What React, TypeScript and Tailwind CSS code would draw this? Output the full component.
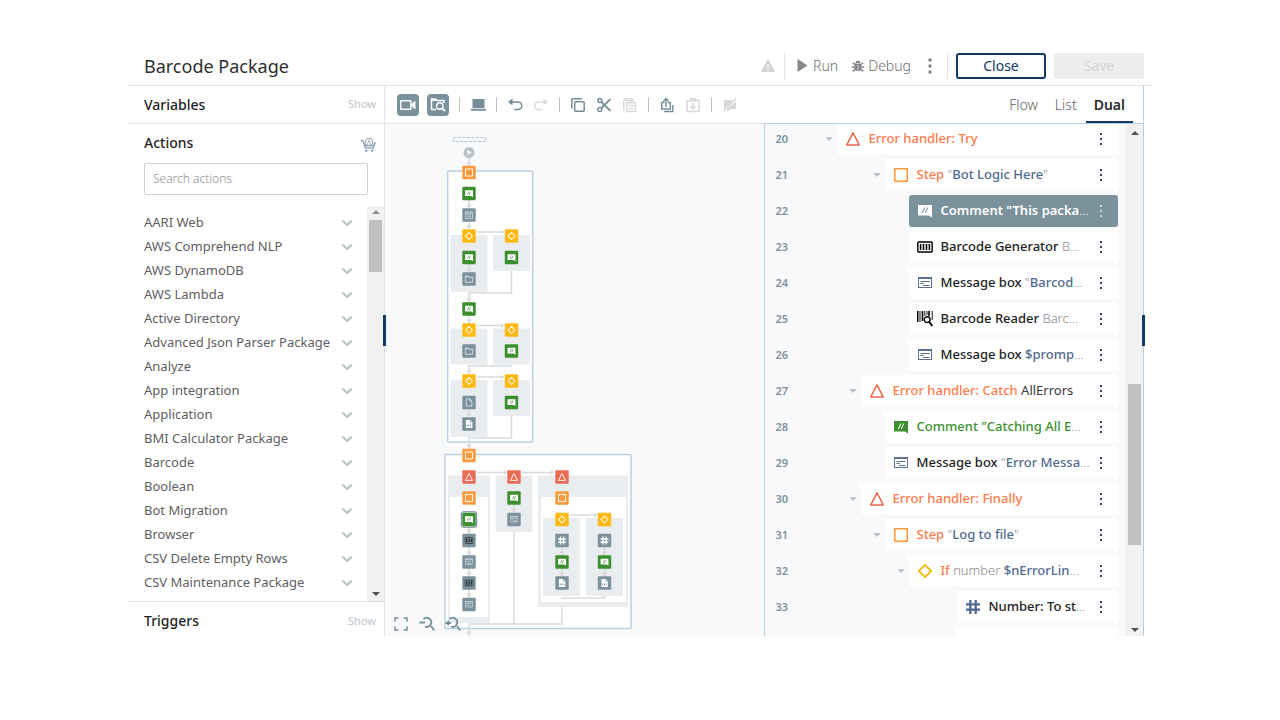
import React from 'react';
import clsx from 'clsx';

type IconName =
  | 'step'
  | 'error'
  | 'if'
  | 'comment'
  | 'calendar'
  | 'folder'
  | 'file'
  | 'log'
  | 'barcode'
  | 'reader'
  | 'message'
  | 'hash';

interface Part {
  text: string;
  className: string;
}

interface Line {
  no: number;
  indent: string;
  icon: IconName;
  iconClass: string;
  toggle?: boolean;
  selected?: boolean;
  parts: Part[];
}

const packages = [
  'AARI Web',
  'AWS Comprehend NLP',
  'AWS DynamoDB',
  'AWS Lambda',
  'Active Directory',
  'Advanced Json Parser Package',
  'Analyze',
  'App integration',
  'Application',
  'BMI Calculator Package',
  'Barcode',
  'Boolean',
  'Bot Migration',
  'Browser',
  'CSV Delete Empty Rows',
  'CSV Maintenance Package',
];

const ORANGE = 'font-medium text-[#ff7b4a]';
const BLUE = 'font-medium text-[#4f6a8f]';
const DARK = 'font-medium text-[#222]';
const GREEN = 'font-medium text-[#3c8f2f]';
const GRAY = 'font-light text-[#8a8a8a]';
const WHITE = 'font-semibold text-white';

const lines: Line[] = [
  { no: 20, indent: 'ml-9', icon: 'error', iconClass: 'text-[#e8694f]', toggle: true, parts: [{ text: 'Error handler: Try', className: ORANGE }] },
  { no: 21, indent: 'ml-21', icon: 'step', iconClass: 'text-[#fb9a3c]', toggle: true, parts: [{ text: 'Step ', className: ORANGE }, { text: '"', className: GRAY }, { text: 'Bot Logic Here', className: BLUE }, { text: '"', className: GRAY }] },
  { no: 22, indent: 'ml-27', icon: 'comment', iconClass: 'text-white', selected: true, parts: [{ text: 'Comment "This packa', className: WHITE }, { text: '...', className: 'font-light text-white' }] },
  { no: 23, indent: 'ml-27', icon: 'barcode', iconClass: 'text-black', parts: [{ text: 'Barcode Generator ', className: DARK }, { text: 'B...', className: GRAY }] },
  { no: 24, indent: 'ml-27', icon: 'message', iconClass: 'text-[#5b7397]', parts: [{ text: 'Message box ', className: DARK }, { text: '"', className: GRAY }, { text: 'Barcod', className: BLUE }, { text: '...', className: GRAY }] },
  { no: 25, indent: 'ml-27', icon: 'reader', iconClass: 'text-black', parts: [{ text: 'Barcode Reader ', className: DARK }, { text: 'Barc...', className: GRAY }] },
  { no: 26, indent: 'ml-27', icon: 'message', iconClass: 'text-[#5b7397]', parts: [{ text: 'Message box ', className: DARK }, { text: '$promp', className: BLUE }, { text: '...', className: GRAY }] },
  { no: 27, indent: 'ml-15', icon: 'error', iconClass: 'text-[#e8694f]', toggle: true, parts: [{ text: 'Error handler: Catch ', className: ORANGE }, { text: 'AllErrors', className: 'text-[#3a3a3a]' }] },
  { no: 28, indent: 'ml-21', icon: 'comment', iconClass: 'text-[#3c8f2f]', parts: [{ text: 'Comment "Catching All E', className: GREEN }, { text: '...', className: GRAY }] },
  { no: 29, indent: 'ml-21', icon: 'message', iconClass: 'text-[#5b7397]', parts: [{ text: 'Message box ', className: DARK }, { text: '"', className: GRAY }, { text: 'Error Messa', className: BLUE }, { text: '...', className: GRAY }] },
  { no: 30, indent: 'ml-15', icon: 'error', iconClass: 'text-[#e8694f]', toggle: true, parts: [{ text: 'Error handler: Finally', className: ORANGE }] },
  { no: 31, indent: 'ml-21', icon: 'step', iconClass: 'text-[#fb9a3c]', toggle: true, parts: [{ text: 'Step ', className: ORANGE }, { text: '"', className: GRAY }, { text: 'Log to file', className: BLUE }, { text: '"', className: GRAY }] },
  { no: 32, indent: 'ml-27', icon: 'if', iconClass: 'text-[#fdb913]', toggle: true, parts: [{ text: 'If ', className: ORANGE }, { text: 'number ', className: GRAY }, { text: '$nErrorLin', className: BLUE }, { text: '...', className: GRAY }] },
  { no: 33, indent: 'ml-39', icon: 'hash', iconClass: 'text-[#4f6a8f]', parts: [{ text: 'Number: To st', className: DARK }, { text: '...', className: GRAY }] },
];

// Glyphs share a 16x16 box so that the list and the flow can both use them
const glyphs: Record<IconName, React.ReactNode> = {
  step: <rect x="1.75" y="1.75" width="12.5" height="12.5" fill="none" stroke="currentColor" strokeWidth="1.6" />,
  error: <path d="M8 1.8 14.3 14H1.7Z" fill="none" stroke="currentColor" strokeWidth="1.6" strokeLinejoin="round" />,
  if: <path d="M8 1.8 14.2 8 8 14.2 1.8 8Z" fill="none" stroke="currentColor" strokeWidth="1.8" strokeLinejoin="round" />,
  comment: (
    <path
      fillRule="evenodd"
      fill="currentColor"
      d="M1 2h14v12.500L12 12.500H1ZM7.2 4.5 4.8 10h1.1l2.4-5.5ZM10.2 4.5 7.8 10h1.1l2.4-5.5Z"
    />
  ),
  calendar: (
    <path d="M1.7 2.7h12.6v11.6H1.7ZM1.7 5.5h12.6M4.5 1v2M11.5 1v2M4 8h8M4 11h8" fill="none" stroke="currentColor" strokeWidth="1.4" />
  ),
  folder: <path d="M1.2 2.7h5l1.2 2h7.4v9H1.2ZM1.2 4.2h6" fill="none" stroke="currentColor" strokeWidth="1.6" />,
  file: <path d="M3.2 1.5h6.3l3.5 3.7v9.3H3.2ZM9.3 1.7v3.7h3.6" fill="none" stroke="currentColor" strokeWidth="1.6" />,
  log: (
    <path fillRule="evenodd" fill="currentColor" d="M2.5 1h7.3L14 5v10H2.5ZM4 9v3h1.5V9ZM7 9v3h1.8V9ZM10.5 9v3H12V9ZM9.500 2v3.500H13Z" />
  ),
  barcode: (
    <>
      <rect x="0.8" y="3" width="14.4" height="10" rx="1" fill="none" stroke="currentColor" strokeWidth="1.4" />
      <path d="M3.6 5v6M6.5 5v6M9.5 5v6M12.4 5v6" stroke="currentColor" strokeWidth="1.6" />
    </>
  ),
  reader: (
    <>
      <path d="M.7 0v11M5.5 0v10M12 0v5" stroke="currentColor" strokeWidth="1.6" />
      <path d="M3 0v11M7.8 0v5M10 0v4M15.2 0v9" stroke="currentColor" strokeWidth="0.9" />
      <circle cx="10.2" cy="8.6" r="2.9" fill="#fff" stroke="currentColor" strokeWidth="1.4" />
      <path d="m12.3 11 3 4" stroke="currentColor" strokeWidth="1.9" />
    </>
  ),
  message: (
    <>
      <rect x="1.500" y="2.500" width="13" height="10" fill="none" stroke="currentColor" />
      <path d="M1 3.500h14" stroke="currentColor" />
      <path d="M3.500 6.500h9M3.500 8.500H7M6 10.500h6.500" stroke="currentColor" />
    </>
  ),
  hash: <path d="M5.3 1v14M10.7 1v14M1 5.3h14M1 10.7h14" stroke="currentColor" strokeWidth="2.3" />,
};

const Icon = ({ name, className }: { name: IconName; className?: string }) => (
  <svg viewBox="0 0 16 16" className={clsx('size-4 shrink-0', className)} aria-hidden="true">
    {glyphs[name]}
  </svg>
);

const Dots = () => (
  <svg viewBox="0 0 4 16" className="h-4 w-1" fill="currentColor" aria-hidden="true">
    <rect x="1" y="2" width="2" height="2" />
    <rect x="1" y="7" width="2" height="2" />
    <rect x="1" y="12" width="2" height="2" />
  </svg>
);

const Header = () => (
  <header className="flex h-[39px] items-center border-b border-[#dfe3e8] pr-2 pl-4">
    <h1 className="text-lg text-[#2f2f2f]">Barcode Package</h1>
    <div className="ml-auto flex items-center">
      <svg viewBox="0 0 16 16" className="size-4" aria-hidden="true">
        <path d="M8 2 14.5 13.5h-13Z" fill="#d2d2d2" stroke="#d2d2d2" strokeLinejoin="round" />
        <path d="M8 6v4M8 11.2v1.2" stroke="#fff" strokeWidth="1.4" />
      </svg>
      <div className="mx-2 h-[26px] w-px bg-[#dfe3e8]" />
      <button className="ml-1 flex items-center gap-1 text-sm font-light text-[#6b6b6b]">
        <svg viewBox="0 0 12 14" className="h-[14px] w-3" aria-hidden="true">
          <path d="M.5 0v13l10-6.500Z" fill="#85888c" />
        </svg>
        Run
      </button>
      <button className="ml-[14px] flex items-center gap-1 text-sm font-light text-[#6b6b6b]">
        <svg viewBox="0 0 12 12" className="size-3" fill="#808387" stroke="#808387" aria-hidden="true">
          <path d="M3.5 3a2.5 2 0 0 1 5 0Z" strokeWidth="0.5" />
          <path d="M2.800 4.2h6.400v4a3.200 3 0 0 1-6.400 0Z" stroke="none" />
          <path d="M.8 2.8 3 4.6h6l2.2-1.8M0 7h12M.8 11.4 3.2 9M11.2 11.4 8.8 9" fill="none" strokeWidth="1.5" />
          <path d="M6 5v6" stroke="#fff" strokeWidth="0.7" />
        </svg>
        Debug
      </button>
      <button aria-label="More" className="mr-[14px] ml-4 text-[#808080]">
        <svg viewBox="0 0 6 16" className="h-4 w-[6px]" fill="currentColor" aria-hidden="true">
          <circle cx="3" cy="2" r="1.7" />
          <circle cx="3" cy="8" r="1.7" />
          <circle cx="3" cy="14" r="1.7" />
        </svg>
      </button>
      <div className="mr-2 h-[26px] w-px bg-[#dfe3e8]" />
      <div className="flex gap-2">
        <button className="h-[26px] w-[90px] rounded-[3px] border-2 border-[#123a66] text-sm leading-none text-[#123a66]">Close</button>
        <button disabled className="h-[26px] w-[90px] rounded-[3px] bg-[#ededed] text-sm leading-none text-[#d5d5d5]">
          Save
        </button>
      </div>
    </div>
  </header>
);

const Sidebar = () => (
  <aside className="flex w-[257px] shrink-0 flex-col border-r border-[#dfe3e8]">
    <div className="flex h-[38px] shrink-0 items-center justify-between border-b border-[#dfe3e8] pr-2 pl-4">
      <h2 className="text-sm font-medium text-[#1f1f1f]">Variables</h2>
      <button className="text-[11px] text-[#bcc4ca]">Show</button>
    </div>
    <div className="flex h-[38px] shrink-0 items-center justify-between pr-2 pl-4">
      <h2 className="text-sm font-medium text-[#1f1f1f]">Actions</h2>
      <button aria-label="Bot store" className="mt-1">
        <svg viewBox="0 0 16 16" className="size-4" fill="none" stroke="#8c9db3" aria-hidden="true">
          <circle cx="9" cy="5" r="3.7" />
          <path d="M7.5 6.8 9 3.2l1.5 3.6" strokeWidth="0.8" />
          <path d="M.8 3.2 3 3.8l2.3 7h8L15.2 5M4.5 8.5h9.3" strokeWidth="1.3" />
          <circle cx="6.3" cy="13.6" r="0.9" fill="#8c9db3" />
          <circle cx="12.2" cy="13.6" r="0.9" fill="#8c9db3" />
        </svg>
      </button>
    </div>
    <input
      type="text"
      aria-label="Search actions"
      placeholder="Search actions"
      className="mx-4 mt-px mb-[11px] h-8 shrink-0 rounded-xs border border-[#d0d4d6] px-2 pb-[2px] text-xs font-light text-[#555] placeholder:text-[#8e8e8e]"
    />
    <div className="flex min-h-0 flex-1">
      <ul className="min-w-0 flex-1 overflow-hidden pt-[5px]">
        {packages.map((name) => (
          <li key={name}>
            <button className="flex h-6 w-full items-center justify-between pr-[14px] pl-4 text-left text-[13px] text-[#5e6062]">
              {name}
              <svg viewBox="0 0 12 12" className="size-3" fill="none" stroke="#b9c4ca" strokeWidth="2" aria-hidden="true">
                <path d="m1.500 3.500 4.500 4.500 4.500-4.500" />
              </svg>
            </button>
          </li>
        ))}
      </ul>
      <div className="flex w-[17px] flex-col items-center bg-[#f1f1f1] py-1">
        <svg viewBox="0 0 8 5" className="h-[5px] w-2" fill="#8f8f8f" aria-hidden="true">
          <path d="M0 4h8L4 0Z" />
        </svg>
        <div className="mt-[5px] h-[52px] w-[13px] bg-[#c1c1c1]" />
        <svg viewBox="0 0 8 5" className="mt-auto h-[5px] w-2" fill="#505050" aria-hidden="true">
          <path d="M0 0h8L4 4Z" />
        </svg>
      </div>
    </div>
    <div className="flex h-[35px] shrink-0 items-center justify-between border-t border-[#dfe3e8] pt-1 pr-2 pl-4">
      <h2 className="text-sm font-medium text-[#1f1f1f]">Triggers</h2>
      <button className="text-[11px] text-[#bcc4ca]">Show</button>
    </div>
  </aside>
);

const Separator = () => <div className="h-[15px] w-px bg-[#b9c4ca]" />;

const Tool = ({ label, disabled, children }: { label: string; disabled?: boolean; children: React.ReactNode }) => (
  <button aria-label={label} disabled={disabled} className={disabled ? 'text-[#d8d8d8]' : 'text-[#768d98]'}>
    <svg viewBox="0 0 16 16" className="size-4" fill="none" stroke="currentColor" strokeWidth="1.5" aria-hidden="true">
      {children}
    </svg>
  </button>
);

const Toolbar = () => (
  <div className="flex h-[38px] shrink-0 items-center justify-between border-b border-[#dfe3e8] pr-[10px] pl-3">
    <div className="flex items-center gap-[10px]">
      <div className="flex gap-2">
        <button aria-label="Record" className="flex size-[22px] items-center justify-center rounded-[4px] bg-[#7b919b]">
          <svg viewBox="0 0 16 16" className="size-4" fill="none" stroke="#fff" strokeWidth="1.4" aria-hidden="true">
            <rect x="0.8" y="3.8" width="10" height="8.400" />
            <path d="M11 7.200 15.500 3.500v9L11 8.800Z" fill="#fff" stroke="none" />
          </svg>
        </button>
        <button aria-label="Inspect" className="flex size-[22px] items-center justify-center rounded-[4px] bg-[#7b919b]">
          <svg viewBox="0 0 16 16" className="size-4" fill="none" stroke="#fff" strokeWidth="1.4" aria-hidden="true">
            <path d="M6 12.500H1.500V2h4L7 3.500h7V6" />
            <path d="M1.500 3.200h4.500" />
            <circle cx="9.800" cy="9" r="3.200" />
            <path d="m12 11.200 3 3" strokeWidth="1.900" />
          </svg>
        </button>
      </div>
      <Separator />
      <Tool label="Device">
        <path d="M2.500 2h12v9h-12ZM1 11.800h15v2H1Z" fill="currentColor" stroke="none" />
      </Tool>
      <Separator />
      <Tool label="Undo">
        <path d="M3 5h8a3.700 3.700 0 0 1 0 7.500H7" />
        <path d="M1 5 5.500 1.500v7Z" fill="currentColor" stroke="none" />
      </Tool>
      <Tool label="Redo" disabled>
        <path d="M13 5H5.500a3.700 3.700 0 0 0 0 7.500H9" />
        <path d="M15 5 10.500 1.500v7Z" fill="currentColor" stroke="none" />
      </Tool>
      <Separator />
      <Tool label="Copy">
        <rect x="4.700" y="4.700" width="9.500" height="9.500" rx="1" />
        <path d="M1.800 11.500V2.700A.8.800 0 0 1 2.600 1.800h9.500" />
      </Tool>
      <Tool label="Cut">
        <circle cx="3.800" cy="3.600" r="2" />
        <circle cx="3.800" cy="12.400" r="2" />
        <path d="M5.300 5 14.500 13.800M5.300 11 14.500 2.200" strokeWidth="1.800" />
      </Tool>
      <Tool label="Paste" disabled>
        <path d="M3 13H1.800V3H4M9.500 3h1.700v1.500M4 1.700h5.500v2H4ZM5 5.700h8.500v8.800H5ZM7 8.500h4.500M7 11.500h4.500" />
      </Tool>
      <Separator />
      <Tool label="Share">
        <path d="M5.500 5.500H2.700v6.500h8.600V5.500H8.500M5 14.500h8.800V8M7 10V2M4.300 4.200 7 1.500l2.700 2.700" strokeWidth="1.400" />
      </Tool>
      <Tool label="Import" disabled>
        <path d="M2 3.500h12v11H2ZM5.500 1.700h5v2h-5ZM8 6v6M5.500 9.500 8 12l2.500-2.500" />
      </Tool>
      <Separator />
      <Tool label="Disable" disabled>
        <path d="M2 3h9.500L2 12.500ZM14 4.500V12H9l-4 3v-3.200Z" fill="currentColor" stroke="none" />
        <path d="M14 1.500 1.500 14.500" />
      </Tool>
    </div>
    <nav className="flex h-full gap-px text-sm">
      <button className="px-2 font-light text-[#5e6062]">Flow</button>
      <button className="px-2 font-light text-[#5e6062]">List</button>
      <button className="border-b-2 border-[#123a66] px-2 pt-[2px] font-semibold text-[#2b2b2b]">Dual</button>
    </nav>
  </div>
);

// [icon, x, y] of each node centre on the canvas
const nodes: [IconName, number, number][] = [
  ['step', 84, 48.5],
  ['comment', 84, 69.5],
  ['calendar', 84, 91],
  ['if', 84, 112],
  ['if', 126.5, 112],
  ['comment', 84, 133.5],
  ['comment', 126.5, 133.5],
  ['folder', 84, 155],
  ['comment', 84, 185],
  ['if', 84, 206],
  ['if', 126.5, 206],
  ['folder', 84, 227],
  ['comment', 126.5, 227],
  ['if', 84, 257],
  ['if', 126.5, 257],
  ['file', 84, 278.5],
  ['comment', 126.5, 278.5],
  ['log', 84, 300],
  ['step', 84, 331.5],
  ['error', 84, 353],
  ['error', 129, 353],
  ['error', 177, 353],
  ['step', 84, 374],
  ['comment', 129, 374],
  ['step', 177, 374],
  ['comment', 84, 395.5],
  ['message', 129, 395.5],
  ['if', 177, 395.5],
  ['if', 219.5, 395.5],
  ['barcode', 84, 416.5],
  ['hash', 177, 416.5],
  ['hash', 219.5, 416.5],
  ['message', 84, 438],
  ['comment', 177, 438],
  ['comment', 219.5, 438],
  ['barcode', 84, 459],
  ['log', 177, 459],
  ['log', 219.5, 459],
  ['message', 84, 480.5],
];

const nodeColor: Partial<Record<IconName, string>> = {
  step: '#fb9a3c',
  error: '#ea6b54',
  if: '#fdb913',
  comment: '#3c8f2f',
};

const glyphColor: Partial<Record<IconName, string>> = {
  barcode: '#22292d',
  message: '#e3e9ec',
  folder: '#dde4e8',
  calendar: '#d3dce1',
  file: '#dde4e8',
};

const blocks = [
  { x: 65.5, y: 111, w: 37, h: 57 },
  { x: 108, y: 111, w: 37, h: 36 },
  { x: 65.5, y: 204.5, w: 37, h: 36 },
  { x: 108, y: 204.5, w: 37, h: 36 },
  { x: 65.5, y: 256, w: 37, h: 57 },
  { x: 108, y: 256, w: 37, h: 36 },
  { x: 63, y: 351.5, w: 42, h: 147.5 },
  { x: 110.5, y: 351.5, w: 37, h: 56.5 },
  { x: 153, y: 351.5, w: 90, h: 131.5 },
];

// Lower end of each short vertical arrow
const arrows: [number, number][] = [
  [84, 42], [84, 84], [84, 105], [84, 148], [84, 178], [84, 199], [84, 250], [84, 293], [84, 324],
  [84, 409], [84, 431], [84, 452], [84, 473], [84, 511], [129, 388],
  [177, 431], [177, 452], [219.5, 431], [219.5, 452],
];

const FlowCanvas = () => (
  <div className="relative min-w-0 flex-1 overflow-hidden bg-[#f7f9fb]">
    <svg viewBox="0 0 379 512" className="h-[512px] w-[379px]" fill="none" role="img" aria-label="Bot flow">
      <rect x="68.500" y="13.500" width="32" height="4" stroke="#b9c4ca" strokeWidth="1.200" strokeDasharray="3 1.500" />
      <circle cx="84" cy="28.500" r="5.500" fill="#b9c4ca" />
      <path d="m82.500 26 4 2.500-4 2.500Z" fill="#fff" />
      <g fill="#fff" stroke="#b8d0e1" strokeWidth="1.500">
        <rect x="62.700" y="47" width="85" height="271" rx="1" />
        <rect x="60" y="330.500" width="186" height="174" rx="1" />
      </g>
      {blocks.map((b) => (
        <rect key={`${b.x}-${b.y}`} x={b.x} y={b.y} width={b.w} height={b.h} fill="#e9edf0" />
      ))}
      <rect x="65" y="373" width="38" height="120" fill="#fff" />
      <rect x="156" y="373" width="85" height="105" fill="#fff" />
      <rect x="158" y="394" width="37" height="78" fill="#e9edf0" />
      <rect x="201" y="394" width="37" height="78" fill="#e9edf0" />
      <g stroke="#d9dadb" strokeWidth="1.500">
        <path d="M84 34v8M84 76v28M84 140v8M84 168v11M84 191v8M84 241v9M84 285v8M84 313v12M84 402v72M84 499v13M129 380v8M177 423v30M219.500 423v30" />
        <path d="M126.500 147v22H84M126.500 241v1H84M126.500 292v22H84M129 408v92M177 483v17H84M219.500 472v2H177v1" />
        <path d="M92 108h27M92 201.500h27M92 253h27M92 348.500h29M137 348.500h32M185 391h27" />
      </g>
      {arrows.map(([x, y]) => (
        <path key={`${x}-${y}`} d={`M${x - 3} ${y - 3.5}h6l-3 3.500Z`} fill="#d9dadb" />
      ))}
      <path
        d="m116 105.500 3 2.500-3 2.500ZM116 199l3 2.500-3 2.500ZM116 250.500l3 2.500-3 2.500ZM119 346l3 2.500-3 2.500ZM166 346l3 2.500-3 2.500ZM209 388.500l3 2.500-3 2.500Z"
        fill="#d9dadb"
      />
      <rect x="76.300" y="387.800" width="15.400" height="15.400" rx="2" fill="#fff" stroke="#5f7399" />
      {nodes.map(([icon, x, y]) => (
        <g key={`${x}-${y}`} color={glyphColor[icon] ?? '#fff'}>
          <rect x={x - 6.7} y={y - 6.7} width="13.400" height="13.400" rx="1" fill={nodeColor[icon] ?? '#7b919b'} />
          <svg x={x - 4.5} y={y - 4.5} width="9" height="9" viewBox="0 0 16 16">
            {glyphs[icon]}
          </svg>
        </g>
      ))}
    </svg>
    <div className="absolute bottom-1 left-2 flex gap-[10px]">
      <Tool label="Fit to screen">
        <path d="M2 5.500V2h3.500M10.500 2H14v3.500M14 10.500V14h-3.500M5.500 14H2v-3.500" />
      </Tool>
      <Tool label="Zoom out">
        <path d="M4.500 3.200a4.500 4.500 0 1 1 1.500 7.300M12 10l3.200 4.500M.5 6.500H6" strokeWidth="1.800" />
      </Tool>
      <Tool label="Zoom in">
        <path d="M4.500 3.200a4.500 4.500 0 1 1 1.500 7.300M12 10l3.200 4.500M.5 7H6M3.200 4.500v5" strokeWidth="1.800" />
      </Tool>
    </div>
  </div>
);

const ListLine = ({ line }: { line: Line }) => (
  <li className="flex h-9 shrink-0 items-center pr-2">
    <span className="w-9 shrink-0 pl-[11px] text-[11px] font-semibold text-[#7b919b]">{line.no}</span>
    <div className={clsx('relative flex h-8 min-w-0 flex-1 items-center rounded-[3px] pr-[15px] pl-2', line.indent, line.selected ? 'bg-[#7b919b]' : 'bg-white')}>
      {line.toggle && (
        <button aria-label="Collapse" className="absolute top-3 -left-3">
          <svg viewBox="0 0 8 8" className="size-2" fill="#b9c4ca" aria-hidden="true">
            <path d="M1 2h6v1L4 6 1 3Z" />
          </svg>
        </button>
      )}
      <Icon name={line.icon} className={line.iconClass} />
      <p className="ml-2 min-w-0 flex-1 text-[13px] whitespace-pre">
        {line.parts.map((part, i) => (
          <span key={i} className={part.className}>
            {part.text}
          </span>
        ))}
      </p>
      <button aria-label="Line menu" className={line.selected ? 'text-[#c9d3d8]' : 'text-[#33415c]'}>
        <Dots />
      </button>
    </div>
  </li>
);

const ListPanel = () => (
  <div className="-mt-px flex min-w-0 flex-1 border-t border-l border-[#b5cfe0] bg-[#f7f9fb]">
    <div className="min-w-0 flex-1 overflow-hidden">
      <ul className="-mt-[3px] flex flex-col">
        {lines.map((line) => (
          <ListLine key={line.no} line={line} />
        ))}
        {/* Next line, mostly scrolled out of view */}
        <li className="flex h-9 shrink-0 items-center pr-2 pl-9">
          <div className="ml-39 flex h-8 flex-1 items-center rounded-[3px] bg-white pl-2">
            <Icon name="comment" className="text-[#3c8f2f]" />
          </div>
        </li>
      </ul>
    </div>
    <div className="flex w-[17px] shrink-0 flex-col items-center bg-[#f1f1f1] pt-[6px] pb-[3px]">
      <svg viewBox="0 0 8 5" className="h-[5px] w-2" fill="#505050" aria-hidden="true">
        <path d="M0 5h8L4 1Z" />
      </svg>
      <div className="mt-[249px] h-[161px] w-[13px] bg-[#c1c1c1]" />
      <svg viewBox="0 0 8 5" className="mt-auto h-[5px] w-2" fill="#505050" aria-hidden="true">
        <path d="M0 0h8L4 4Z" />
      </svg>
    </div>
  </div>
);

export default function App() {
  return (
    <div className="min-h-screen bg-white px-[10%] pt-[47px] font-['Noto_Sans',sans-serif]">
      <Header />
      <div className="relative mr-2 flex h-[550px]">
        <Sidebar />
        <main className="relative flex min-w-0 flex-1 flex-col border-r border-[#b5cfe0]">
          <Toolbar />
          <div className="flex min-h-0 flex-1">
            <FlowCanvas />
            <ListPanel />
          </div>
          {/* Resize handles */}
          <div className="absolute top-[229px] -left-[2px] h-[31px] w-[3px] bg-[#123a66]" />
          <div className="absolute top-[229px] -right-[2px] h-[31px] w-[3px] bg-[#123a66]" />
        </main>
      </div>
    </div>
  );
}
